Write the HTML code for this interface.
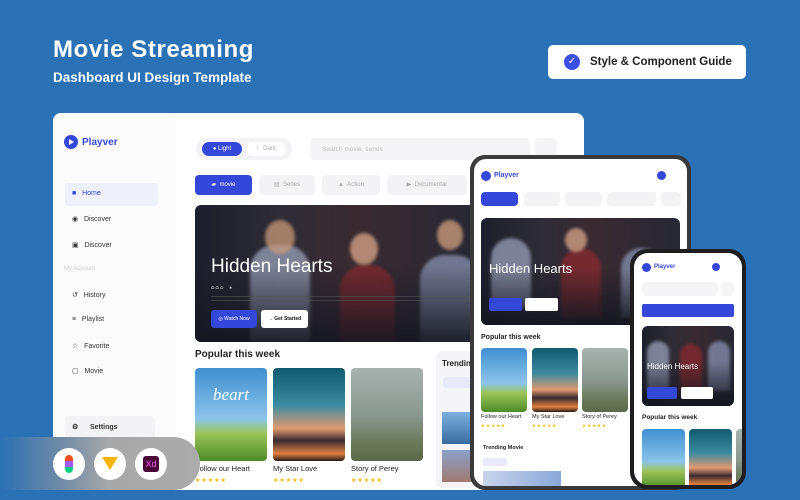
<!DOCTYPE html>
<html><head><meta charset="utf-8"><style>
*{margin:0;padding:0;box-sizing:border-box}
body{width:800px;height:500px;overflow:hidden;background:#2a71b5;font-family:"Liberation Sans",sans-serif;position:relative}
.a{position:absolute}
.t{color:#fff;font-weight:bold}
.nav{font-size:7px;color:#333}
.poster{border-radius:4px;overflow:hidden}
.p1{background:linear-gradient(#3f8fd0 0%,#8cc4ea 55%,#9cc55a 70%,#4e8a25 100%)}
.p2{background:linear-gradient(#0f5a6e 0%,#3c8aa0 40%,#e09a70 65%,#3a2a30 78%,#e08040 92%,#2a1a18 100%)}
.p3{background:linear-gradient(#a7b3ae 0%,#8a9892 50%,#6a7a5a 80%,#5a6a48 100%)}
.hero{background:linear-gradient(90deg,#1c1f2c 0%,#2e2c36 30%,#3a2a30 55%,#262834 100%);border-radius:6px;overflow:hidden}
.hero .f{filter:blur(1.5px);opacity:.75}
.star{color:#f5b800;font-size:6px;letter-spacing:1px}
.tab{background:#f3f3f5;border-radius:4px;font-size:6px;color:#aaa;text-align:center}
</style></head><body>

<div class="a t" style="left:53px;top:36px;font-size:24px;letter-spacing:0.6px">Movie Streaming</div>
<div class="a t" style="left:53px;top:70px;font-size:13.5px">Dashboard UI Design Template</div>
<div class="a" style="left:548px;top:45px;width:198px;height:34px;background:#fff;border-radius:5px"></div>
<div class="a" style="left:564px;top:54px;width:16px;height:16px;border-radius:50%;background:#3b4fe0;color:#fff;font-size:10px;text-align:center;line-height:16px">✓</div>
<div class="a" style="left:590px;top:56px;font-size:11.5px;color:#222;font-weight:bold">Style &amp; Component Guide</div>

<!-- dashboard -->
<div class="a" style="left:53px;top:113px;width:531px;height:377px;background:#fff;border-radius:8px;overflow:hidden">
 <div class="a" style="left:0;top:0;width:122px;height:377px;background:#fbfbfc"></div>
</div>
<div class="a" style="left:64px;top:135px;width:14px;height:14px;border-radius:50%;background:#3547d8"></div>
<div class="a" style="left:69px;top:139px;width:0;height:0;border-left:5px solid #fff;border-top:3px solid transparent;border-bottom:3px solid transparent"></div>
<div class="a" style="left:82px;top:137px;font-size:10px;color:#3547d8;font-weight:bold">Playver</div>
<div class="a" style="left:65px;top:183px;width:93px;height:23px;background:#eef0fc;border-radius:3px"></div>
<div class="a nav" style="left:72px;top:190px;color:#3547d8">■ &nbsp;&nbsp;Home</div>
<div class="a nav" style="left:72px;top:215px">◉ &nbsp;&nbsp;Discover</div>
<div class="a nav" style="left:72px;top:241px">▣ &nbsp;&nbsp;Discover</div>
<div class="a nav" style="left:64px;top:266px;color:#ccc;font-size:6px">My Account</div>
<div class="a nav" style="left:72px;top:291px">↺ &nbsp;&nbsp;History</div>
<div class="a nav" style="left:72px;top:316px">≡ &nbsp;&nbsp;Playlist</div>
<div class="a nav" style="left:72px;top:342px">☆ &nbsp;&nbsp;Favorite</div>
<div class="a nav" style="left:72px;top:367px">▢ &nbsp;&nbsp;Movie</div>
<div class="a" style="left:65px;top:416px;width:90px;height:23px;background:#f3f3f5;border-radius:4px"></div>
<div class="a nav" style="left:72px;top:423px;font-weight:bold">⚙ &nbsp;&nbsp;&nbsp;&nbsp;&nbsp;Settings</div>

<div class="a" style="left:196px;top:138px;width:96px;height:22px;background:#f3f3f5;border-radius:11px"></div>
<div class="a" style="left:202px;top:142px;width:40px;height:14px;background:#3547d8;border-radius:7px;color:#fff;font-size:6px;line-height:14px;text-align:center">● Light</div>
<div class="a" style="left:246px;top:142px;width:40px;height:14px;background:#fff;border-radius:7px;color:#aaa;font-size:6px;line-height:14px;text-align:center">☾ Dark</div>
<div class="a" style="left:310px;top:138px;width:220px;height:22px;background:#f5f5f7;border-radius:4px;font-size:6.5px;color:#bbb;padding:8px 12px">Search movie, series</div>
<div class="a" style="left:535px;top:138px;width:22px;height:22px;background:#f5f5f7;border-radius:4px"></div>

<div class="a tab" style="left:195px;top:175px;width:57px;height:20px;background:#3547d8;color:#fff;line-height:20px">▰ &nbsp;movie</div>
<div class="a tab" style="left:259px;top:175px;width:56px;height:20px;line-height:20px">▤ &nbsp;Series</div>
<div class="a tab" style="left:322px;top:175px;width:58px;height:20px;line-height:20px">▲ &nbsp;Action</div>
<div class="a tab" style="left:387px;top:175px;width:80px;height:20px;line-height:20px">▶ &nbsp;Documentar</div>

<div class="a hero" style="left:195px;top:205px;width:290px;height:137px">
 <div class="a f" style="left:55px;top:40px;width:60px;height:110px;background:#9aa0b8;border-radius:25px 25px 0 0"></div>
 <div class="a f" style="left:70px;top:15px;width:30px;height:34px;background:#c89a7a;border-radius:50%"></div>
 <div class="a f" style="left:145px;top:60px;width:55px;height:90px;background:#8a2a30;border-radius:25px 25px 0 0"></div>
 <div class="a f" style="left:155px;top:28px;width:28px;height:32px;background:#d9a88a;border-radius:50%"></div>
 <div class="a f" style="left:225px;top:50px;width:60px;height:100px;background:#8a92b0;border-radius:25px 25px 0 0"></div>
 <div class="a f" style="left:242px;top:15px;width:26px;height:30px;background:#d2a080;border-radius:50%"></div>
 <div class="a" style="left:0;top:60px;width:290px;height:77px;background:linear-gradient(rgba(20,22,32,0),rgba(20,22,32,.9))"></div>
</div>
<div class="a" style="left:211px;top:256px;font-size:19px;color:#fff">Hidden Hearts</div>
<div class="a" style="left:211px;top:285px;font-size:4px;color:#ddd">⬭ ⬭ ⬭ &nbsp;&nbsp;&nbsp; ★</div>
<div class="a" style="left:211px;top:296px;width:260px;height:5px;border-top:1px solid #555;border-bottom:1px solid #555;opacity:.6"></div>
<div class="a" style="left:211px;top:310px;width:46px;height:18px;background:#3547d8;border-radius:3px;color:#fff;font-size:5px;line-height:18px;text-align:center">◎ Watch Now</div>
<div class="a" style="left:261px;top:310px;width:47px;height:18px;background:#fff;border-radius:3px;color:#111;font-size:5px;line-height:18px;text-align:center;font-weight:bold">→ Get Started</div>

<div class="a" style="left:195px;top:349px;font-size:10px;font-weight:bold;color:#222">Popular this week</div>
<div class="a poster p1" style="left:195px;top:368px;width:72px;height:93px"><div style="color:#fff;font-family:'Liberation Serif',serif;font-style:italic;font-size:17px;text-align:center;margin-top:17px">beart</div></div>
<div class="a poster p2" style="left:273px;top:368px;width:72px;height:93px"></div>
<div class="a poster p3" style="left:351px;top:368px;width:72px;height:93px"></div>
<div class="a" style="left:195px;top:464px;font-size:7.5px;color:#222">Follow our Heart</div>
<div class="a" style="left:273px;top:464px;font-size:7.5px;color:#222">My Star Love</div>
<div class="a" style="left:351px;top:464px;font-size:7.5px;color:#222">Story of Perey</div>
<div class="a star" style="left:195px;top:477px">★★★★★</div>
<div class="a star" style="left:273px;top:477px">★★★★★</div>
<div class="a star" style="left:351px;top:477px">★★★★★</div>
<div class="a" style="left:436px;top:351px;width:40px;height:137px;background:#f5f5f7;border-radius:6px"></div>
<div class="a" style="left:442px;top:359px;font-size:8px;font-weight:bold;color:#222">Trendin</div>
<div class="a" style="left:443px;top:377px;width:30px;height:11px;background:#e8eafc;border-radius:3px"></div>
<div class="a" style="left:442px;top:412px;width:32px;height:32px;background:linear-gradient(#7ab0e0,#3a6aa0)"></div>
<div class="a" style="left:442px;top:450px;width:32px;height:32px;background:linear-gradient(#8aa0c8,#a07a70)"></div>

<!-- bottom pill -->
<div class="a" style="left:0;top:437px;width:200px;height:53px;border-radius:0 27px 27px 0;background:linear-gradient(90deg,#2a71b5 0%,#6f8aa6 30%,#a8a8a8 55%,#ababab 100%)"></div>
<div class="a" style="left:53px;top:448px;width:32px;height:32px;border-radius:50%;background:#fff"></div>
<div class="a" style="left:65px;top:455px;width:8px;height:18px;background:linear-gradient(#f24e1e 33%,#a259ff 33%,#a259ff 66%,#0acf83 66%);border-radius:4px"></div>
<div class="a" style="left:94px;top:448px;width:32px;height:32px;border-radius:50%;background:#fff"></div>
<div class="a" style="left:102px;top:457px;width:0;height:0;border-left:8px solid transparent;border-right:8px solid transparent;border-top:13px solid #f7b500"></div>
<div class="a" style="left:135px;top:448px;width:32px;height:32px;border-radius:50%;background:#fff"></div>
<div class="a" style="left:143px;top:456px;width:16px;height:16px;background:#470137;border-radius:3px;color:#ff61f6;font-size:9px;text-align:center;line-height:16px">Xd</div>

<!-- tablet -->
<div class="a" style="left:470px;top:155px;width:221px;height:335px;background:#3a3a3c;border-radius:15px"></div>
<div class="a" style="left:474px;top:159px;width:213px;height:327px;background:#fff;border-radius:12px;overflow:hidden">
 <div class="a" style="left:7px;top:12px;width:10px;height:10px;border-radius:50%;background:#3547d8"></div>
 <div class="a" style="left:20px;top:13px;font-size:7px;color:#3547d8;font-weight:bold">Playver</div>
 <div class="a" style="left:183px;top:12px;width:9px;height:9px;border-radius:50%;background:#3547d8"></div>
 <div class="a tab" style="left:7px;top:33px;width:37px;height:14px;background:#3547d8"></div>
 <div class="a tab" style="left:50px;top:33px;width:36px;height:14px"></div>
 <div class="a tab" style="left:91px;top:33px;width:37px;height:14px"></div>
 <div class="a tab" style="left:133px;top:33px;width:49px;height:14px"></div>
 <div class="a tab" style="left:187px;top:33px;width:20px;height:14px"></div>
 <div class="a hero" style="left:7px;top:59px;width:199px;height:107px">
  <div class="a f" style="left:10px;top:20px;width:40px;height:70px;background:#9aa0b8;border-radius:20px 20px 0 0"></div>
  <div class="a f" style="left:80px;top:30px;width:40px;height:70px;background:#8a2a30;border-radius:20px 20px 0 0"></div>
  <div class="a f" style="left:84px;top:10px;width:22px;height:24px;background:#d9a88a;border-radius:50%"></div>
  <div class="a f" style="left:140px;top:30px;width:40px;height:70px;background:#8a92b0;border-radius:20px 20px 0 0"></div>
  <div class="a" style="left:0;top:50px;width:199px;height:57px;background:linear-gradient(rgba(20,22,32,0),rgba(20,22,32,.95))"></div>
  <div class="a" style="left:8px;top:43px;font-size:13px;color:#fff">Hidden Hearts</div>
  <div class="a" style="left:8px;top:80px;width:33px;height:13px;background:#3547d8;border-radius:2px"></div>
  <div class="a" style="left:44px;top:80px;width:33px;height:13px;background:#fff;border-radius:2px"></div>
 </div>
 <div class="a" style="left:7px;top:175px;font-size:7px;font-weight:bold;color:#222">Popular this week</div>
 <div class="a poster p1" style="left:7px;top:189px;width:46px;height:64px"></div>
 <div class="a poster p2" style="left:58px;top:189px;width:46px;height:64px"></div>
 <div class="a poster p3" style="left:108px;top:189px;width:46px;height:64px"></div>
 <div class="a" style="left:7px;top:255px;font-size:5.5px;color:#222">Follow our Heart</div>
 <div class="a" style="left:58px;top:255px;font-size:5.5px;color:#222">My Star Love</div>
 <div class="a" style="left:108px;top:255px;font-size:5.5px;color:#222">Story of Perey</div>
 <div class="a star" style="left:7px;top:264px;font-size:4.5px">★★★★★</div>
 <div class="a star" style="left:58px;top:264px;font-size:4.5px">★★★★★</div>
 <div class="a star" style="left:108px;top:264px;font-size:4.5px">★★★★★</div>
 <div class="a" style="left:9px;top:286px;font-size:5.5px;font-weight:bold;color:#222">Trending Movie</div>
 <div class="a" style="left:9px;top:299px;width:24px;height:8px;background:#e8eafc;border-radius:2px"></div>
 <div class="a" style="left:9px;top:312px;width:78px;height:20px;background:linear-gradient(90deg,#c8d4ec,#8aa8d8)"></div>
</div>

<!-- phone -->
<div class="a" style="left:630px;top:249px;width:116px;height:240px;background:#1e1e20;border-radius:17px"></div>
<div class="a" style="left:634px;top:253px;width:108px;height:232px;background:#fff;border-radius:14px;overflow:hidden">
 <div class="a" style="left:8px;top:10px;width:9px;height:9px;border-radius:50%;background:#3547d8"></div>
 <div class="a" style="left:20px;top:11px;font-size:6px;color:#3547d8;font-weight:bold">Playver</div>
 <div class="a" style="left:78px;top:10px;width:8px;height:8px;border-radius:50%;background:#3547d8"></div>
 <div class="a" style="left:8px;top:29px;width:76px;height:14px;background:#f5f5f7;border-radius:3px"></div>
 <div class="a" style="left:87px;top:29px;width:13px;height:14px;background:#f5f5f7;border-radius:3px"></div>
 <div class="a" style="left:8px;top:51px;width:92px;height:13px;background:#3547d8;border-radius:2px"></div>
 <div class="a hero" style="left:8px;top:73px;width:92px;height:80px">
  <div class="a f" style="left:5px;top:15px;width:22px;height:50px;background:#9aa0b8;border-radius:11px 11px 0 0"></div>
  <div class="a f" style="left:38px;top:18px;width:22px;height:50px;background:#8a2a30;border-radius:11px 11px 0 0"></div>
  <div class="a f" style="left:66px;top:15px;width:22px;height:50px;background:#8a92b0;border-radius:11px 11px 0 0"></div>
  <div class="a" style="left:0;top:35px;width:92px;height:45px;background:linear-gradient(rgba(20,22,32,0),rgba(20,22,32,.95))"></div>
  <div class="a" style="left:5px;top:36px;font-size:8px;color:#fff">Hidden Hearts</div>
  <div class="a" style="left:5px;top:61px;width:30px;height:12px;background:#3547d8;border-radius:2px"></div>
  <div class="a" style="left:39px;top:61px;width:32px;height:12px;background:#fff;border-radius:2px"></div>
 </div>
 <div class="a" style="left:8px;top:161px;font-size:6.5px;font-weight:bold;color:#222">Popular this week</div>
 <div class="a poster p1" style="left:8px;top:176px;width:43px;height:60px"></div>
 <div class="a poster p2" style="left:55px;top:176px;width:43px;height:60px"></div>
 <div class="a poster p3" style="left:102px;top:176px;width:43px;height:60px"></div>
</div>
</body></html>
